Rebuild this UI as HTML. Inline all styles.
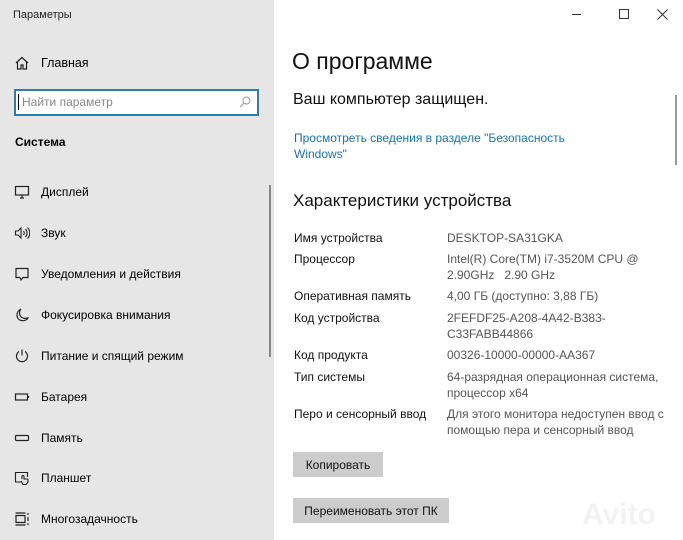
<!DOCTYPE html>
<html><head><meta charset="utf-8"><style>
*{margin:0;padding:0;box-sizing:border-box}
body{width:683px;height:540px;overflow:hidden;font-family:"Liberation Sans","DejaVu Sans",sans-serif;background:#fff;position:relative;color:#000}
.side{position:absolute;left:0;top:0;width:274px;height:540px;background:#e6e6e6}
.a{position:absolute;white-space:nowrap}
.t{font-size:12px;line-height:14px}
.ic{position:absolute;left:14px;width:16px;height:16px}
.lbl{left:294px;font-size:12px;color:#111}
.val{left:447px;font-size:12px;color:#555;line-height:16px}
.btn{position:absolute;background:#cccccc;font-size:12px;display:flex;align-items:center;justify-content:center;color:#111}
</style></head><body>
<div class="side">
 <div class="a" style="left:13px;top:9px;font-size:11px;color:#222">Параметры</div>
 <svg class="ic" style="top:55px" viewBox="0 0 16 16" fill="none" stroke="#222" stroke-width="1.2"><path d="M2 8L8 2.5L14 8M3.5 7v7h3.5v-4h2v4h3.5V7"/></svg>
 <div class="a t" style="left:41px;top:56px;font-size:12.5px">Главная</div>
 <div class="a" style="left:14px;top:89px;width:245px;height:27px;border:2px solid #2d7ea6;background:#fff"></div>
 <div class="a" style="left:18px;top:94px;width:1px;height:16px;background:#000"></div>
 <div class="a t" style="left:22px;top:95px;color:#888">Найти параметр</div>
 <svg class="a" style="left:238px;top:95px" width="14" height="14" viewBox="0 0 14 14" fill="none" stroke="#999"><circle cx="8.5" cy="5.5" r="3.5"/><path d="M6 8L2 12"/></svg>
 <div class="a t" style="left:15px;top:135px;font-weight:bold">Система</div>
 <div class="a" style="left:269px;top:185px;width:2px;height:172px;background:#888"></div>
 <svg class="ic" style="top:184px" viewBox="0 0 16 16" fill="none" stroke="#222" stroke-width="1.2"><rect x="1.5" y="2.5" width="13" height="8.5"/><path d="M6 14h4M8 11v3"/></svg>
 <div class="a t" style="left:41px;top:185px">Дисплей</div>
 <svg class="ic" style="top:225px" viewBox="0 0 16 16" fill="none" stroke="#222" stroke-width="1.1"><path d="M1.5 6h2.5l3-3v10l-3-3H1.5zM9.5 6c1 1 1 3 0 4M11.5 4c2 2 2 6 0 8M13.5 2.5c3 3 3 8 0 11"/></svg>
 <div class="a t" style="left:41px;top:226px">Звук</div>
 <svg class="ic" style="top:266px" viewBox="0 0 16 16" fill="none" stroke="#222" stroke-width="1.2"><path d="M2 2.5h12v9H9l-2 2.5-1-2.5H2z"/></svg>
 <div class="a t" style="left:41px;top:267px">Уведомления и действия</div>
 <svg class="ic" style="top:307px" viewBox="0 0 16 16" fill="none" stroke="#222" stroke-width="1.2"><path d="M7 2c-3 3-2 11 7 9-2 4-11 4-11-3 0-3 2-5 4-6z"/></svg>
 <div class="a t" style="left:41px;top:308px">Фокусировка внимания</div>
 <svg class="ic" style="top:348px" viewBox="0 0 16 16" fill="none" stroke="#222" stroke-width="1.2"><path d="M8 1.5v6M5 3.5a5.5 5.5 0 1 0 6 0"/></svg>
 <div class="a t" style="left:41px;top:349px">Питание и спящий режим</div>
 <svg class="ic" style="top:389px" viewBox="0 0 16 16" fill="none" stroke="#222" stroke-width="1.2"><rect x="1.5" y="5" width="12" height="6"/><path d="M14.5 7v2"/></svg>
 <div class="a t" style="left:41px;top:390px">Батарея</div>
 <svg class="ic" style="top:430px" viewBox="0 0 16 16" fill="none" stroke="#222" stroke-width="1.2"><rect x="1.5" y="5.5" width="13" height="5" rx="1"/></svg>
 <div class="a t" style="left:41px;top:431px">Память</div>
 <svg class="ic" style="top:470px" viewBox="0 0 16 16" fill="none" stroke="#222" stroke-width="1.1"><path d="M7 12H1.5V2.5h12V7M8 9V6.5a1 1 0 0 1 2 0V9h3a1 1 0 0 1 1 1v2l-2 2.5H9L7 11"/></svg>
 <div class="a t" style="left:41px;top:471px">Планшет</div>
 <svg class="ic" style="top:511px" viewBox="0 0 16 16" fill="none" stroke="#222" stroke-width="1.2"><path d="M1.5 2h10M1.5 14h10M2 4.5h9v7H2zM14 2v2M14 6v4M14 12v2"/></svg>
 <div class="a t" style="left:41px;top:512px">Многозадачность</div>
</div>
<div class="a" style="left:572px;top:14px;width:9px;height:1px;background:#333"></div>
<div class="a" style="left:619px;top:9px;width:10px;height:10px;border:1px solid #333"></div>
<svg class="a" style="left:657px;top:9px" width="11" height="11" viewBox="0 0 11 11" stroke="#333"><path d="M0.5 0.5l10 10M10.5 0.5l-10 10"/></svg>
<div class="a" style="left:675px;top:95px;width:2px;height:70px;background:#999"></div>
<div class="a" style="left:292px;top:48px;font-size:23px;color:#111">О программе</div>
<div class="a" style="left:293px;top:91px;font-size:16px;color:#111">Ваш компьютер защищен.</div>
<div class="a" style="left:294px;top:130px;font-size:12px;line-height:16px;color:#1a73b0">Просмотреть сведения в разделе "Безопасность<br>Windows"</div>
<div class="a" style="left:293px;top:191px;font-size:17px;color:#111">Характеристики устройства</div>
<div class="a lbl" style="top:231px">Имя устройства</div><div class="a val" style="top:230px">DESKTOP-SA31GKA</div>
<div class="a lbl" style="top:252px">Процессор</div><div class="a val" style="top:251px">Intel(R) Core(TM) i7-3520M CPU @<br>2.90GHz &nbsp; 2.90 GHz</div>
<div class="a lbl" style="top:289px">Оперативная память</div><div class="a val" style="top:288px">4,00 ГБ (доступно: 3,88 ГБ)</div>
<div class="a lbl" style="top:311px">Код устройства</div><div class="a val" style="top:310px">2FEFDF25-A208-4A42-B383-<br>C33FABB44866</div>
<div class="a lbl" style="top:348px">Код продукта</div><div class="a val" style="top:347px">00326-10000-00000-AA367</div>
<div class="a lbl" style="top:370px">Тип системы</div><div class="a val" style="top:369px">64-разрядная операционная система,<br>процессор x64</div>
<div class="a lbl" style="top:407px">Перо и сенсорный ввод</div><div class="a val" style="top:406px">Для этого монитора недоступен ввод с<br>помощью пера и сенсорный ввод</div>
<div class="btn" style="left:293px;top:452px;width:90px;height:25px">Копировать</div>
<div class="btn" style="left:293px;top:498px;width:156px;height:25px">Переименовать этот ПК</div>
<div class="a" style="left:582px;top:498px;font-size:30px;font-weight:bold;color:#f2f2f2">Avito</div>
</body></html>
